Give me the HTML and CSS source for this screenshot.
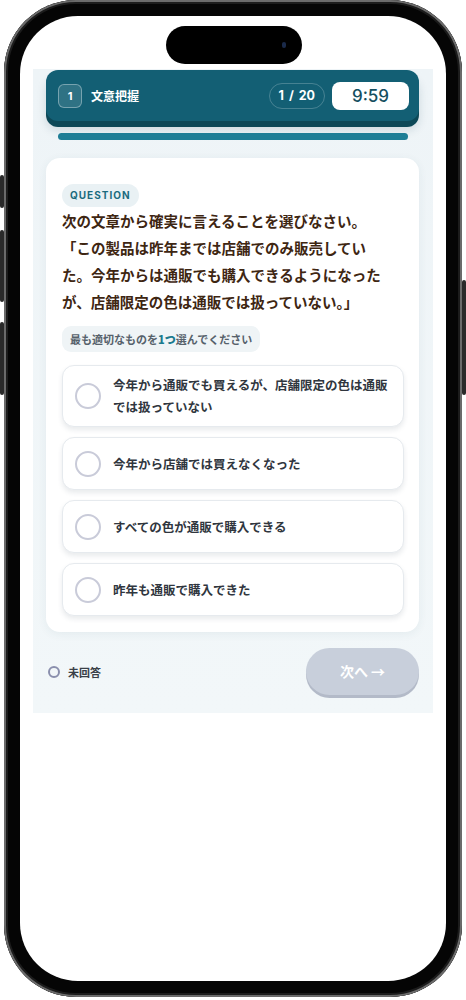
FILE: index.html
```html
<!doctype html>
<html lang="ja">
<head>
    <meta charset="UTF-8">
    <title>文意把握</title>
    <link rel="stylesheet" href="styles.css">
</head>
<body>
    <div class="phone">
        <span class="btn btn-a"></span>
        <span class="btn btn-b"></span>
        <span class="btn btn-c"></span>
        <span class="btn btn-r"></span>
        <div class="screen">
            <div class="island"><i></i></div>
            <div class="panel">
                <div class="head">
                    <div class="head-left">
                        <span class="num">1</span>
                        <span class="title">文意把握</span>
                    </div>
                    <div class="head-right">
                        <span class="count">1 / 20</span>
                        <span class="timer">9:59</span>
                    </div>
                </div>
                <div class="progress"></div>

                <div class="card">
                    <span class="tag">QUESTION</span>
                    <p class="q">次の文章から確実に言えることを選びなさい。<br>「この製品は昨年までは店舗でのみ販売していた。今年からは通販でも購入できるようになったが、店舗限定の色は通販では扱っていない。」</p>
                    <span class="hint">最も適切なものを<b>1つ</b>選んでください</span>
                    <ul class="opts">
                        <li><span class="radio"></span><span class="txt">今年から通販でも買えるが、店舗限定の色は通販では扱っていない</span></li>
                        <li><span class="radio"></span><span class="txt">今年から店舗では買えなくなった</span></li>
                        <li><span class="radio"></span><span class="txt">すべての色が通販で購入できる</span></li>
                        <li><span class="radio"></span><span class="txt">昨年も通販で購入できた</span></li>
                    </ul>
                </div>

                <div class="foot">
                    <div class="status"><span class="dot"></span>未回答</div>
                    <span class="next">次へ →</span>
                </div>
            </div>
        </div>
    </div>
</body>
</html>
```

FILE: styles.css
```css
* {
    margin: 0;
    padding: 0;
    list-style: none;
    box-sizing: border-box;
}
body {
    background: #fff;
    font-family: "Noto Sans CJK JP", "Noto Sans", sans-serif;
}
.phone {
    position: relative;
    width: 458px;
    height: 997px;
    margin-left: 4px;
    padding: 16px;
    border-radius: 72px;
    background: #050505;
    box-shadow: inset 0 0 0 2px #6b6b6b, inset 0 0 0 4px #1c1c1c;
}
.btn {
    position: absolute;
    width: 4px;
    background: #2a2a2a;
    border-radius: 2px;
}
.btn-a { left: -4px; top: 175px; height: 33px; }
.btn-b { left: -4px; top: 230px; height: 72px; }
.btn-c { left: -4px; top: 322px; height: 73px; }
.btn-r { right: -4px; top: 280px; height: 115px; }

.screen {
    position: relative;
    height: 100%;
    border-radius: 58px;
    background: #fff;
    padding-top: 53px;
    overflow: hidden;
}
.island {
    position: absolute;
    top: 10px;
    left: 146px;
    width: 136px;
    height: 38px;
    border-radius: 19px;
    background: #000;
}
.island i {
    position: absolute;
    right: 16px;
    top: 16px;
    width: 4px;
    height: 6px;
    border-radius: 2px;
    background: #1a2a4a;
}

.panel {
    width: 400px;
    margin-left: 13px;
    padding: 1px 14px 18px 13px;
    background: linear-gradient(#eef4f7, #f2f7f9);
}
.head {
    display: flex;
    justify-content: space-between;
    align-items: center;
    height: 51px;
    padding: 0 10px 0 12px;
    border-radius: 12px;
    background: #135f74;
    box-shadow: 0 6px 0 #0d4857, 0 9px 10px rgba(20, 60, 80, .15);
}
.head-left, .head-right {
    display: flex;
    align-items: center;
}
.num {
    width: 24px;
    height: 24px;
    border: 1px solid rgba(255, 255, 255, .35);
    border-radius: 6px;
    background: rgba(255, 255, 255, .12);
    color: #fff;
    font: 700 11px "Inter", sans-serif;
    text-align: center;
    line-height: 22px;
}
.title {
    margin-left: 9px;
    color: #fff;
    font-size: 12px;
    font-weight: 700;
}
.count {
    height: 26px;
    padding: 0 9px;
    border: 1px solid rgba(255, 255, 255, .22);
    border-radius: 13px;
    color: #fff;
    font: 700 12.5px "Inter", sans-serif;
    word-spacing: 2px;
    line-height: 24px;
}
.timer {
    width: 77px;
    height: 28px;
    margin-left: 7px;
    border-radius: 8px;
    background: #fff;
    color: #154f60;
    font: 500 17px "Inter", sans-serif;
    text-align: center;
    line-height: 28px;
}
.progress {
    height: 7px;
    margin: 12px 11px 0 12px;
    border-radius: 4px;
    background: #1e7e96;
}

.card {
    margin-top: 18px;
    padding: 22px 15px 16px 16px;
    border-radius: 14px;
    background: #fff;
    box-shadow: 0 2px 10px rgba(40, 80, 100, .07);
}
.tag {
    display: inline-block;
    height: 23px;
    padding: 0 8px;
    border-radius: 12px;
    background: #e9f1f4;
    color: #1b6b7e;
    font: 700 10px "Inter", sans-serif;
    letter-spacing: 1px;
    line-height: 23px;
}
.q {
    width: 330px;
    margin-top: 0;
    color: #3e2612;
    font-size: 14.5px;
    font-weight: 700;
    line-height: 27px;
}
.hint {
    display: inline-block;
    height: 26px;
    margin-top: 11px;
    padding: 0 8px;
    border-radius: 9px;
    background: #eff4f6;
    color: #56616b;
    font-size: 11px;
    font-weight: 700;
    line-height: 26px;
}
.hint b {
    color: #1b7a8e;
}
.opts {
    margin-top: 13px;
}
.opts li {
    display: flex;
    align-items: center;
    min-height: 53px;
    margin-bottom: 10px;
    padding: 8px 12px 8px 12px;
    border: 1px solid #e6eaee;
    border-radius: 12px;
    background: #fff;
    box-shadow: 0 3px 5px rgba(40, 60, 80, .1);
}
.opts li:first-child {
    min-height: 61px;
}
.opts li:last-child {
    margin-bottom: 0;
}
.radio {
    flex: none;
    width: 26px;
    height: 26px;
    border: 2px solid #c9cbd9;
    border-radius: 50%;
}
.txt {
    margin-left: 12px;
    color: #30363e;
    font-size: 12.5px;
    font-weight: 700;
    line-height: 22px;
}

.foot {
    display: flex;
    justify-content: space-between;
    align-items: center;
    margin-top: 16px;
    padding-left: 2px;
}
.status {
    display: flex;
    align-items: center;
    color: #3a4048;
    font-size: 11px;
    font-weight: 700;
}
.dot {
    width: 12px;
    height: 12px;
    margin-right: 8px;
    border: 2px solid #8a8fad;
    border-radius: 50%;
}
.next {
    width: 113px;
    height: 47px;
    border-radius: 24px;
    background: #c8cfdb;
    box-shadow: 0 3px 0 #b3bac8;
    color: #fff;
    font-size: 14px;
    font-weight: 700;
    text-align: center;
    line-height: 47px;
}
```
